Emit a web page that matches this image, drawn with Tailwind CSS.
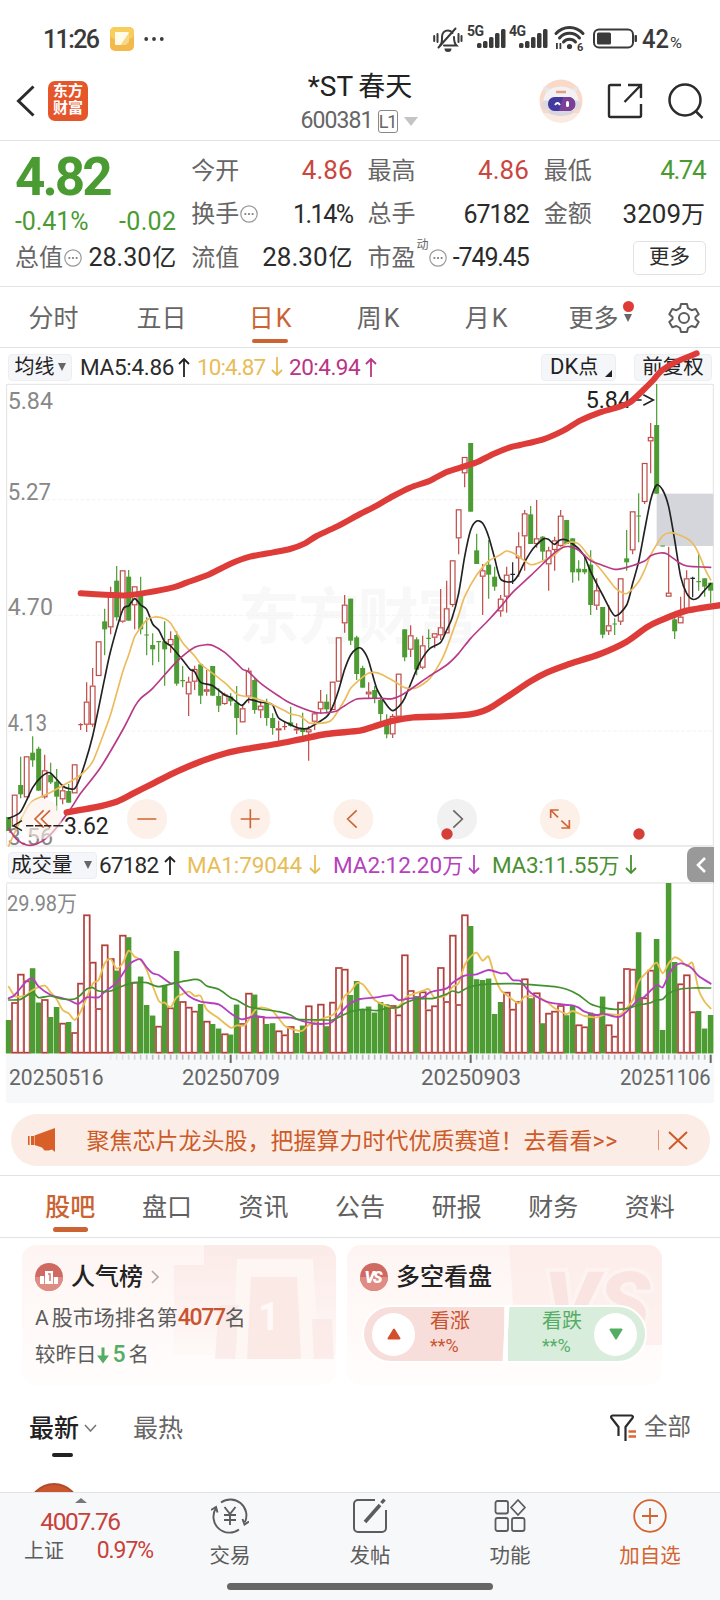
<!DOCTYPE html>
<html lang="zh-CN">
<head>
  <meta charset="UTF-8" />
  <meta name="viewport" content="width=device-width, initial-scale=1.0"/>
  <title>*ST春天 600381</title>
  <script src="https://cdn.jsdelivr.net/npm/@tailwindcss/browser@4"></script>
</head>
<body class="w-[720px] h-[1600px] overflow-hidden bg-white text-[#2b2b2b] font-['Roboto','Noto_Sans_CJK_SC',sans-serif] leading-none whitespace-nowrap flex flex-col">

  <!-- 状态栏 -->
  <div class="h-16 shrink-0 flex items-center pl-[43px] pr-[37px] pt-[14px] text-[#3a3a3a]">
    <span class="w-[56px] text-[25px] font-medium tracking-[-1.600px]">11:26</span>
    <svg class="w-6 h-6 ml-[11px]" viewBox="0 0 24 24">
      <rect width="24" height="24" rx="5" fill="#f3b94a"/>
      <rect width="24" height="12" rx="5" fill="#f7cd5c"/>
      <path d="M5 5h13a1 1 0 0 1 1 1L11 18H6a1 1 0 0 1-1-1z" fill="#fffbe8"/>
      <path d="M19 6v9l-3 3h-5z" fill="#f9d78a"/>
    </svg>
    <svg class="w-5 h-6 ml-[10px]" viewBox="0 0 20 24" fill="#3a3a3a"><circle cx="2.2" cy="12" r="1.9"/><circle cx="10" cy="12" r="1.9"/><circle cx="17.8" cy="12" r="1.9"/></svg>
    <svg class="w-[250px] h-8 ml-auto" viewBox="0 0 250 32" fill="#3a3a3a">
      <!-- 静音 -->
      <g fill="none" stroke="#3a3a3a" stroke-width="2" stroke-linecap="round">
        <path d="M7 22.500C9.500 20 9 17 9 14c0-4 2.500-6.500 6-6.500 2 0 3.500 1 4.500 2.500M21 14c0 4 0 6 2.500 8.500H11"/>
        <path d="M22.500 5.500 5.500 24.500M1.200 13v5M4.500 11v8M28.500 13v5M25.500 11v8"/>
      </g>
      <path d="M11.500 25.500h7a3.500 3.500 0 0 1-7 0z"/>
      <text x="34" y="13" font-size="14" font-weight="700" textLength="17">5G</text>
      <g><rect x="44" y="20" width="4.500" height="5" rx="1.500"/><rect x="50" y="18" width="4.500" height="7" rx="1.500"/><rect x="56" y="14" width="4.500" height="11" rx="1.500"/><rect x="62" y="10" width="4.500" height="15" rx="1.500"/><rect x="68" y="6" width="4.500" height="19" rx="1.500" /></g>
      <text x="76" y="13" font-size="14" font-weight="700" textLength="17">4G</text>
      <g><rect x="86" y="20" width="4.500" height="5" rx="1.500"/><rect x="92" y="18" width="4.500" height="7" rx="1.500"/><rect x="98" y="14" width="4.500" height="11" rx="1.500"/><rect x="104" y="10" width="4.500" height="15" rx="1.500"/><rect x="110" y="6" width="4.500" height="19" rx="1.500"/></g>
      <!-- wifi -->
      <g fill="none" stroke="#3a3a3a" stroke-width="3" stroke-linecap="round">
        <path d="M123 10.500a18 18 0 0 1 27 0M126.500 15a13 13 0 0 1 20 0M130.500 19a8 8 0 0 1 12 0"/>
      </g>
      <circle cx="136.500" cy="23.500" r="2.600"/>
      <path d="M123 20h1.800v6H123zM126.500 20h1.800v6h-1.800z"/>
      <text x="144" y="28" font-size="11" font-weight="700">6</text>
      <rect x="161" y="6.500" width="39" height="18" rx="5" fill="none" stroke="#3a3a3a" stroke-width="2"/>
      <rect x="164" y="9.500" width="14" height="12" rx="1.500"/>
      <rect x="201.500" y="12" width="2.500" height="7" rx="1"/>
      <text x="209" y="25" font-size="25" font-weight="500" textLength="27" lengthAdjust="spacingAndGlyphs">42</text>
      <text x="237" y="25" font-size="15" textLength="12" lengthAdjust="spacingAndGlyphs">%</text>
    </svg>
  </div>

  <!-- 标题栏 -->
  <header class="relative h-[77px] shrink-0 border-b border-[#e3e3e3] flex items-center px-4 pb-[2px]">
    <svg class="w-[19px] h-8" viewBox="0 0 19 32" fill="none" stroke="#2b2b2b" stroke-width="3"><path d="M17.500 1.500 2.500 16l15 14.500"/></svg>
    <div class="ml-[13px] w-[40px] h-10 rounded-[7px] bg-[#e6562b] text-white text-[15px] leading-[17px] font-bold text-center pt-[2px]">东方<br>财富</div>
    <div class="absolute inset-x-0 top-[6px] flex flex-col items-center pointer-events-none">
      <h1 class="text-[28px] leading-[34px] font-normal text-[#222]">*ST<span class="ml-[5px] text-[27px]">春天</span></h1>
      <div class="mt-[5px] flex items-center text-[23px] leading-6 text-[#666] ml-[-2px]">
        <span class="tracking-[-0.9px]">600381</span>
        <span class="ml-[5px] w-5 h-[23px] border border-[#888] rounded-[3px] text-[18px] leading-[22px] text-center tracking-[-1px]">L1</span>
        <span class="ml-[6px] w-0 h-0 border-x-[7px] border-x-transparent border-t-[9px] border-t-[#c4c4c4]"></span>
      </div>
    </div>
    <svg class="ml-auto w-11 h-11" viewBox="0 0 44 44">
      <circle cx="22" cy="22" r="21.500" fill="#f9d9c7"/>
      <path d="M4 34a21.500 21.500 0 0 0 36 0z" fill="#fbeae1"/>
      <path d="M8 16 4 7l8 3zM36 16l4-9-8 3z" fill="#e9e6ea"/>
      <ellipse cx="22" cy="21.500" rx="17.500" ry="14" fill="#f3f1f4"/>
      <ellipse cx="22" cy="32" rx="13" ry="5" fill="#d9d6de"/>
      <circle cx="7" cy="26" r="4.500" fill="#dcd9e0"/><circle cx="37" cy="26" r="4.500" fill="#dcd9e0"/>
      <path d="M17 13h10" stroke="#e0a27c" stroke-width="2.500"/>
      <rect x="9" y="18" width="27" height="14" rx="6.500" fill="#4339a0"/>
      <path d="M24 18h5.500a6.500 6.500 0 0 1 0 14H20z" fill="#7a3f96"/>
      <path d="M16 26q2.500-4 5 0" fill="none" stroke="#fff" stroke-width="1.800"/><rect x="27" y="22" width="3" height="6" rx="1.500" fill="#fff"/>
    </svg>
    <svg class="ml-[24px] w-9 h-9" viewBox="0 0 36 36" fill="none" stroke="#2b2b2b" stroke-width="2.400"><path d="M14 2H3.500A1.500 1.500 0 0 0 2 3.500v29A1.500 1.500 0 0 0 3.500 34h29a1.500 1.500 0 0 0 1.500-1.500V21M21 2h13v13M33.500 2.500 17.500 19"/></svg>
    <svg class="ml-[25px] w-9 h-9 mr-[0.500px]" viewBox="0 0 36 36" fill="none" stroke="#2b2b2b" stroke-width="2.500"><circle cx="17" cy="17" r="15.500"/><path d="m27.500 28 7 7"/></svg>
  </header>

  <!-- 行情 -->
  <section class="h-[146px] shrink-0 border-b border-[#e3e3e3] pt-[8px] px-[15px] grid grid-cols-4 auto-rows-[43.500px] content-start gap-x-[15px] text-2xl text-[#666] *:flex *:items-center *:justify-between">
    <div class="pt-[14px]"><b class="text-[53px] font-bold text-[#4a9b32] tracking-[-3px]">4.82</b></div>
    <div><span>今开</span><span class="text-[26px] text-[#c9473f]">4.86</span></div>
    <div><span>最高</span><span class="text-[26px] text-[#c9473f]">4.86</span></div>
    <div><span>最低</span><span class="text-[26px] text-[#4a9b32] tracking-[-1.500px]">4.74</span></div>

    <div class="pt-[14px] text-[25px] text-[#4a9b32]"><span class="tracking-[-0.1px]">-0.41%</span><span class="tracking-[0.3px]">-0.02</span></div>
    <div>
      <span class="flex items-center">换手<svg class="w-[18px] h-[18px] ml-px" viewBox="0 0 18 18"><circle cx="9" cy="9" r="8.200" fill="none" stroke="#999" stroke-width="1.200"/><path d="M4.500 9h1.800M8.100 9h1.800M11.700 9h1.800" stroke="#888" stroke-width="1.800"/></svg></span>
      <span class="text-[25px] text-[#2b2b2b] tracking-[-1.500px]">1.14%</span>
    </div>
    <div><span>总手</span><span class="text-[25px] text-[#2b2b2b] tracking-[-1px]">67182</span></div>
    <div><span>金额</span><span class="text-[26px] text-[#2b2b2b]">3209<span class="text-[24px]">万</span></span></div>

    <div>
      <span class="flex items-center">总值<svg class="w-[18px] h-[18px] ml-px" viewBox="0 0 18 18"><circle cx="9" cy="9" r="8.200" fill="none" stroke="#999" stroke-width="1.200"/><path d="M4.500 9h1.800M8.100 9h1.800M11.700 9h1.800" stroke="#888" stroke-width="1.800"/></svg></span>
      <span class="text-[25px] text-[#2b2b2b]">28.30<span class="text-[24px] ml-px">亿</span></span>
    </div>
    <div><span>流值</span><span class="text-[26px] text-[#2b2b2b]">28.30<span class="text-[24px] ml-px">亿</span></span></div>
    <div>
      <span class="flex items-center">市盈<sup class="text-[12px] top-[-13px] ml-px">动</sup><svg class="w-[18px] h-[18px]" viewBox="0 0 18 18"><circle cx="9" cy="9" r="8.200" fill="none" stroke="#999" stroke-width="1.200"/><path d="M4.500 9h1.800M8.100 9h1.800M11.700 9h1.800" stroke="#888" stroke-width="1.800"/></svg></span>
      <span class="text-[25px] text-[#2b2b2b] tracking-[-1.100px]">-749.45</span>
    </div>
    <div><button class="ml-auto mr-[-1px] w-[73px] h-[34px] border border-[#e2e2e2] rounded-[5px] text-[20.500px] text-[#2b2b2b]">更多</button></div>
  </section>

  <!-- 周期切换 -->
  <nav class="relative h-[61px] shrink-0 border-b border-[#e3e3e3] pt-[2px] flex items-center text-[25px] text-[#666]">
    <span class="w-[107px] text-center">分时</span>
    <span class="w-[109px] text-center">五日</span>
    <span class="w-[108px] text-center relative text-[#cb6432]">日<span class="ml-[2px]">K</span><i class="absolute left-[36px] top-[33px] w-9 h-1 rounded-full bg-[#cb6432]"></i></span>
    <span class="w-[108px] text-center">周<span class="ml-[2px]">K</span></span>
    <span class="w-[108px] text-center">月<span class="ml-[2px]">K</span></span>
    <span class="w-[107px] text-center relative">更多
      <i class="absolute left-[83px] top-[-5px] w-[11px] h-[11px] rounded-full bg-[#dd3c36]"></i>
      <i class="absolute left-[84px] top-[8px] w-0 h-0 border-x-[4.500px] border-x-transparent border-t-[8px] border-t-[#666]"></i>
    </span>
    <svg class="w-8 h-8 ml-[21px]" viewBox="0 0 32 32" fill="none" stroke="#5c5c5c" stroke-width="2" stroke-linejoin="round"><path d="M13 2h6l1 4.200 3.500 2L27.700 7l3 5.200-3.200 2.900v2l3.200 2.900-3 5.200-4.200-1.200-3.500 2L19 30h-6l-1-4-3.500-2-4.200 1.200-3-5.200 3.200-2.900v-2l-3.200-2.900 3-5.200 4.200 1.200 3.500-2z"/><circle cx="16" cy="16" r="5"/></svg>
  </nav>

  <!-- 均线 -->
  <div class="h-[36px] shrink-0 flex items-center px-2 pt-[2px] text-[22.500px]">
    <span class="w-16 h-[27px] rounded bg-[#f5f6f9] border border-[#eceef1] flex items-center justify-center text-[20px] text-[#222]">均线<i class="ml-[3px] w-0 h-0 border-x-[4px] border-x-transparent border-t-[8px] border-t-[#666]"></i></span>
    <span class="ml-[8px] w-[110px] flex items-center justify-between"><span class="tracking-[-0.3px]">MA5:4.86</span><svg class="w-3 h-5" viewBox="0 0 12 20" fill="none" stroke="#222" stroke-width="1.800"><path d="M6 20V2M1 7l5-5 5 5"/></svg></span>
    <span class="ml-[7px] w-[86px] flex items-center justify-between text-[#e8bd58]"><span class="tracking-[-0.9px]">10:4.87</span><svg class="w-3 h-5" viewBox="0 0 12 20" fill="none" stroke="#e8bd58" stroke-width="1.800"><path d="M6 0v18M1 13l5 5 5-5"/></svg></span>
    <span class="ml-[6px] w-[88px] flex items-center justify-between text-[#b93585]"><span class="tracking-[-0.5px]">20:4.94</span><svg class="w-3 h-5" viewBox="0 0 12 20" fill="none" stroke="#b93585" stroke-width="1.800"><path d="M6 20V2M1 7l5-5 5 5"/></svg></span>
    <span class="ml-auto w-[75px] h-[27px] rounded bg-[#f5f6f9] border border-[#eceef1] flex items-center pl-2 text-[22px] text-[#222]">DK<span class="text-[20px]">点</span><i class="ml-[7px] mt-3 w-0 h-0 border-l-[7px] border-l-transparent border-b-[7px] border-b-[#222]"></i></span>
    <span class="ml-[18px] w-[78px] h-[27px] rounded bg-[#f5f6f9] border border-[#eceef1] flex items-center justify-center text-[20.500px] text-[#222]">前复权</span>
  </div>

  <!-- K线图，坐标单位为 1/3 像素 -->
  <div class="relative z-10 h-[463px] shrink-0">
    <svg id="kline" class="absolute left-0 top-[-4px] w-[720px] h-[470px] overflow-visible" viewBox="0 0 2160 1410"></svg>
  </div>

  <!-- 成交量 -->
  <div class="h-[36px] shrink-0 flex items-center pl-2 pr-[6px] text-[22.500px]">
    <span class="w-[89px] h-[27px] rounded bg-[#f5f6f9] border border-[#eceef1] flex items-center justify-between pl-[2px] pr-[4px] text-[20.500px] text-[#222]">成交量<i class="w-0 h-0 border-x-[4.500px] border-x-transparent border-t-[8px] border-t-[#666]"></i></span>
    <span class="ml-[2px] w-[77px] flex items-center justify-between"><span class="tracking-[-0.8px]">67182</span><svg class="w-3 h-5" viewBox="0 0 12 20" fill="none" stroke="#222" stroke-width="1.800"><path d="M6 20V2M1 7l5-5 5 5"/></svg></span>
    <span class="ml-[11px] w-[134px] flex items-center justify-between text-[#e8bd58]"><span class="tracking-[-0.1px]">MA1:79044</span><svg class="w-3 h-5" viewBox="0 0 12 20" fill="none" stroke="#e8bd58" stroke-width="1.800"><path d="M6 0v18M1 13l5 5 5-5"/></svg></span>
    <span class="ml-[12px] w-[147px] flex items-center justify-between text-[#b541bd]"><span>MA2:12.20<span class="text-[21px]">万</span></span><svg class="w-3 h-5" viewBox="0 0 12 20" fill="none" stroke="#b541bd" stroke-width="1.800"><path d="M6 0v18M1 13l5 5 5-5"/></svg></span>
    <span class="ml-[12px] w-[145px] flex items-center justify-between text-[#4a9032]"><span class="tracking-[-0.3px]">MA3:11.55<span class="text-[21px]">万</span></span><svg class="w-3 h-5" viewBox="0 0 12 20" fill="none" stroke="#4a9032" stroke-width="1.800"><path d="M6 0v18M1 13l5 5 5-5"/></svg></span>
    <span class="ml-auto w-[27px] h-9 rounded-l-lg bg-[#999] flex items-center justify-center"><svg class="w-3 h-4" viewBox="0 0 12 16" fill="none" stroke="#fff" stroke-width="2.600"><path d="M10 1 3 8l7 7"/></svg></span>
  </div>
  <svg id="volume" class="w-[720px] h-[223px] mt-[-3px] shrink-0" viewBox="0 0 2160 669"></svg>

  <!-- 广告条 -->
  <div class="mt-[11px] mx-[10.500px] h-[52px] shrink-0 rounded-[26px] bg-[#fbede5] flex items-center text-[23px] text-[#cd5b29]">
    <svg class="ml-[17px] w-7 h-6" viewBox="0 0 28 24" fill="#d95f29"><path d="M0 8h1.600v9H0zM3 8h3v9H3zM6.500 7.500 27 0v24l-3-2.500-3.500 1-4 0-2.500-3-7.500-2.500z"/></svg>
    <span class="ml-[31px] w-[535px] pt-[2px]">聚焦芯片龙头股，把握算力时代优质赛道！去看看<span class="tracking-[0.8px]">&gt;&gt;</span></span>
    <i class="ml-[36px] w-px h-5 bg-[#dd9470]"></i>
    <svg class="ml-[9px] w-5 h-[19px]" viewBox="0 0 20 19" fill="none" stroke="#cd5b29" stroke-width="2"><path d="m1 1 18 17M19 1 1 18"/></svg>
  </div>

  <!-- 资讯栏目 -->
  <nav class="relative mt-[9px] h-[63px] shrink-0 border-y border-[#e3e3e3] flex items-center pt-[2px] pl-[22px] text-[25px] text-[#606060] *:w-[96.600px] *:text-center">
    <span class="relative text-[#cb6432] font-medium">股吧<i class="absolute left-[31px] top-[32px] w-[35px] h-[5px] rounded-full bg-[#cb6432]"></i></span>
    <span>盘口</span>
    <span>资讯</span>
    <span>公告</span>
    <span>研报</span>
    <span>财务</span>
    <span>资料</span>
  </nav>

  <div class="mt-[7px] pl-[22px] flex gap-[11px] h-[140px] shrink-0">
    <!-- 人气榜 -->
    <div class="relative w-[314px] rounded-[14px] overflow-hidden bg-linear-to-b from-[#fef5f3] to-[#fffdfc] px-[13px] pt-[18px]">
      <svg class="absolute right-0 top-0 w-[170px] h-[140px]" viewBox="0 0 170 140">
        <defs><linearGradient id="fade" x1="0" y1="0" x2="0" y2="1"><stop offset="0" stop-color="#fae7e4" stop-opacity=".75"/><stop offset="1" stop-color="#fae7e4" stop-opacity=".1"/></linearGradient></defs>
        <path d="M38 0h132v110H8V20h30z" fill="url(#fade)"/>
        <path d="M71 14h76l6 100H67z" fill="#fef6f3"/><path d="M85 32h46l4 82H81z" fill="#f9e4e1" opacity=".75"/>
        <path d="M53 60h20l-4 54H49zM146 74h20l2 40h-20z" fill="#fae7e4" opacity=".7"/>
        <text x="92" y="85" font-size="38" font-weight="700" fill="#fffaf8">1</text>
      </svg>
      <div class="relative flex items-center h-7 text-2xl font-medium text-[#222]">
        <svg class="w-7 h-7 mr-2" viewBox="0 0 28 28"><circle cx="14" cy="14" r="14" fill="#cf6a62"/><path d="M0 14a14 14 0 0 0 28 0z" fill="#de8c84"/><path d="M5 13h4v8H5zM10 8h8v13h-8zM19 14h4v7h-4z" fill="#fff"/><path d="M13 11h2v7" stroke="#d5766f" stroke-width="1.500" fill="none"/></svg>
        人气榜
        <svg class="w-2 h-[14px] ml-2" viewBox="0 0 8 14" fill="none" stroke="#aaa" stroke-width="1.600"><path d="m1 1 6 6-6 6"/></svg>
      </div>
      <p class="relative mt-[15px] text-[21px] leading-6 text-[#5c5c5c]">A<span class="ml-[3px]">股市场排名第</span><span class="font-medium text-[23px] text-[#c9542f] tracking-[-1.300px]">4077</span>名</p>
      <p class="relative mt-[13px] text-[20.500px] leading-6 text-[#5c5c5c] flex items-center">较昨日<svg class="w-3 h-[17px]" viewBox="0 0 12 16"><path d="M4.500 0h3v8H12l-6 8-6-8h4.500z" fill="#55ad65"/></svg><span class="font-medium text-[23px] text-[#55ad65] ml-[4px] mr-[3px]">5</span>名</p>
    </div>

    <!-- 多空看盘 -->
    <div class="relative w-[315px] rounded-[14px] overflow-hidden bg-linear-to-b from-[#fef5f3] to-[#fffdfc] px-[13px] pt-[18px]">
      <svg class="absolute right-0 top-0 w-[160px] h-[100px]" viewBox="0 0 160 100">
        <path d="M7 0h153v100H14z" fill="#fbe9e6" opacity=".6"/>
        <text x="42" y="86" font-size="84" font-weight="900" font-style="italic" fill="#fae4e1" stroke="#fdf4f2" stroke-width="7" paint-order="stroke" textLength="106" lengthAdjust="spacingAndGlyphs">VS</text>
      </svg>
      <div class="relative flex items-center h-7 text-2xl font-medium text-[#222]">
        <svg class="w-7 h-7 mr-2" viewBox="0 0 28 28"><circle cx="14" cy="14" r="14" fill="#cf6a62"/><path d="M0 14a14 14 0 0 0 28 0z" fill="#de8c84"/><text x="4.500" y="20" font-size="16" font-weight="900" font-style="italic" fill="#fff" textLength="18">VS</text></svg>
        多空看盘
      </div>
      <div class="relative mt-[14px] ml-[2px] w-[285px] h-[58px] rounded-full border-2 border-white flex overflow-hidden text-[20px]">
        <div class="w-[140px] bg-[#f8dedb] flex items-center pl-2 text-[#c9542f]">
          <i class="w-[43px] h-[43px] rounded-full bg-white flex items-center justify-center"><svg class="w-[14px] h-3" viewBox="0 0 14 12"><path d="M7 1.500 12.500 10.500h-11z" fill="#d1502b" stroke="#d1502b" stroke-width="2" stroke-linejoin="round"/></svg></i>
          <span class="ml-[15px] mt-[-3px] flex flex-col leading-[26px]"><span>看涨</span><span class="text-[18px] leading-6">**%</span></span>
        </div>
        <div class="w-[4px] bg-white skew-x-[-3deg]"></div>
        <div class="flex-1 bg-[#d9eddd] flex items-center justify-end pr-2 text-[#55ad65]">
          <span class="mr-[12px] mt-[-3px] flex flex-col leading-[26px]"><span>看跌</span><span class="text-[18px] leading-6">**%</span></span>
          <i class="w-[43px] h-[43px] rounded-full bg-white flex items-center justify-center"><svg class="w-[14px] h-3" viewBox="0 0 14 12"><path d="M7 10.500 12.500 1.500h-11z" fill="#55ad65" stroke="#55ad65" stroke-width="2" stroke-linejoin="round"/></svg></i>
        </div>
      </div>
    </div>
  </div>

  <!-- 帖子列表 -->
  <div class="mt-[20px] h-11 shrink-0 flex items-center pt-[2px] pl-[29px] pr-[29px] text-[25px] text-[#666]">
    <span class="relative font-medium text-[#222]">最新<i class="absolute left-[23px] top-[37px] w-[21px] h-[4px] rounded-full bg-[#222]"></i></span>
    <svg class="ml-[5px] w-[13px] h-2" viewBox="0 0 13 8" fill="none" stroke="#777" stroke-width="1.600"><path d="m1 1 5.500 6L12 1"/></svg>
    <span class="ml-[36px]">最热</span>
    <svg class="ml-auto w-[26px] h-7" viewBox="0 0 26 28" fill="none" stroke="#2b2b2b" stroke-width="2.200"><path d="M8.500 22V13L1.500 4c-.8-1-.3-2.500 1-2.500h19c1.300 0 1.800 1.500 1 2.500l-7 9v14"/><path d="M18.500 17.500H26M18.500 22.500H26" stroke="#dd6a35" stroke-width="2.600"/></svg>
    <span class="ml-[8px] text-[23.500px]">全部</span>
  </div>
  <div class="h-[43px] shrink-0 pt-[34px] pl-7 overflow-hidden">
    <div class="w-[52px] h-[52px] rounded-full bg-[#c9562d] border-2 border-[#b54a2b]"></div>
  </div>

  <!-- 底部导航 -->
  <footer class="relative h-[108px] shrink-0 bg-[#f7f8fa] border-t border-[#e0e2e5] text-[20.500px] text-[#5c5c5c] flex">
    <i class="absolute left-[75px] top-[5px] w-0 h-0 border-x-[6px] border-x-transparent border-b-[5px] border-b-[#777]"></i>
    <div class="w-[160px] pt-[17px] text-center text-[#c9413c]">
      <div class="text-[24.500px] leading-6 tracking-[-1.400px]">4007.76</div>
      <div class="mt-[5px] pl-6 pr-[7px] flex justify-between items-center"><span class="text-[#5c5c5c] text-[20px]">上证</span><span class="text-[23px] leading-6 tracking-[-1.100px]">0.97%</span></div>
    </div>
    <div class="w-[140px] pt-[5px] flex flex-col items-center gap-[12px]">
      <svg class="w-[38px] h-9" viewBox="0 0 38 36" fill="none" stroke="#5c5c5c" stroke-width="1.900"><path d="M10 4.500A16 16 0 0 1 34 24M28 31.500A16 16 0 0 1 5 10M0 12l5-3 1.500 5.500M38 23.500l-4.500 3-2-5.500M13.500 9l5.500 7 5.500-7M19 16v11M13 17h12M13 22h12"/></svg>
      <span>交易</span>
    </div>
    <div class="w-[140px] pt-[5px] flex flex-col items-center gap-[12px]">
      <svg class="w-9 h-9" viewBox="0 0 36 36" fill="none" stroke="#5c5c5c" stroke-width="2"><path d="M23 2H6a4 4 0 0 0-4 4v24a4 4 0 0 0 4 4h24a4 4 0 0 0 4-4V12"/><path d="m13 24 15-17" stroke-width="3.600"/><path d="m29.500 5 3-3.500" stroke-width="3.400"/></svg>
      <span>发帖</span>
    </div>
    <div class="w-[140px] pt-[5px] flex flex-col items-center gap-[12px]">
      <svg class="w-8 h-9" viewBox="0 0 32 36" fill="none" stroke="#5c5c5c" stroke-width="1.800"><rect x="1.500" y="3" width="12.500" height="12.500" rx="2"/><path d="m24 2 7 7.500-7 7.500-7-7.500z" stroke-linejoin="round"/><rect x="1.500" y="20" width="12.500" height="13" rx="2"/><rect x="18" y="20" width="12.500" height="13" rx="2"/></svg>
      <span>功能</span>
    </div>
    <div class="w-[140px] pt-[5px] flex flex-col items-center gap-[12px] text-[#d4632f]">
      <svg class="w-9 h-9" viewBox="0 0 36 36" fill="none" stroke="#d4632f" stroke-width="1.800"><circle cx="18" cy="18" r="15.800"/><path d="M18 10v16M10 18h16"/></svg>
      <span>加自选</span>
    </div>
    <i class="absolute left-[227px] top-[90px] w-[266px] h-[7px] rounded-full bg-[#666]"></i>
  </footer>

  <script>
    const RED = '#bf4a46', GREEN = '#4c9c33';
    const xOf = i => 26 + 18 * i;

    // [颜色, 最高, 实体上沿, 实体下沿, 最低]
    const candles = [
      ['g',1311,1311,1353,1353],['r',1244,1244,1340,1340],['g',1130,1215,1243,1255],['r',1129,1129,1252,1252],
      ['g',1069,1118,1141,1160],['g',1100,1106,1232,1232],['r',1124,1171,1252,1256],['g',1148,1185,1207,1212],
      ['g',1167,1205,1250,1292],['r',1213,1231,1258,1273],['g',1212,1233,1268,1268],['r',1153,1153,1240,1240],
      ['r',1030,1033,1035,1050],['r',907,965,1034,1056],['r',864,917,1034,1040],['r',784,784,888,888],
      ['g',686,724,748,826],['r',620,648,742,763],['g',558,602,712,722],['r',571,571,725,728],
      ['g',570,590,722,722],['r',619,619,676,748],['g',590,645,748,763],['g',712,764,766,826],
      ['g',760,795,808,856],['g',784,784,787,846],['g',724,784,808,917],['r',754,777,796,818],
      ['g',754,765,911,917],['g',858,901,904,922],['r',890,905,943,1008],['r',857,867,905,930],
      ['g',850,853,947,972],['r',870,928,935,947],['g',858,858,947,947],['g',925,948,977,996],
      ['r',938,943,972,974],['g',940,950,964,977],['g',918,968,1014,1064],['r',975,985,1027,1027],
      ['r',863,872,950,970],['g',893,900,990,1001],['r',965,977,991,1014],['g',956,968,1014,1037],
      ['g',1000,1014,1044,1064],['r',1022,1045,1051,1083],['r',1026,1039,1041,1050],['g',980,1027,1038,1040],
      ['r',1030,1046,1051,1062],['g',998,1044,1056,1070],['r',1038,1048,1057,1142],['r',995,1000,1025,1050],
      ['r',930,965,988,1001],['g',943,965,988,1000],['r',905,905,990,990],['r',772,772,905,905],
      ['r',645,674,730,758],['g',656,656,782,795],['g',767,772,882,900],['g',857,864,923,923],
      ['r',907,935,943,957],['g',918,930,955,970],['g',955,960,1002,1025],['g',1003,1025,1063,1075],
      ['r',1002,1008,1063,1074],['r',881,881,1010,1010],['g',748,748,832,844],['r',736,766,809,831],
      ['g',772,778,869,886],['r',767,796,863,868],['g',748,774,776,805],['r',760,760,773,805],
      ['r',627,742,766,780],['r',602,685,760,760],['r',541,541,675,680],['r',388,388,475,523],
      ['r',231,231,280,322],['g',189,189,395,395],['g',461,511,552,552],['r',552,571,590,705],
      ['g',480,554,584,656],['g',560,590,620,632],['r',645,656,694,710],['r',560,584,650,698],
      ['k',547,582,584,612],['r',457,499,535,590],['r',390,400,469,572],['g',378,403,492,492],
      ['r',360,475,492,503],['g',468,470,515,540],['r',500,511,553,632],['r',470,481,510,572],
      ['r',390,407,498,500],['g',420,420,492,492],['g',475,475,577,608],['g',541,566,577,602],
      ['g',523,567,577,583],['g',511,554,675,705],['r',595,631,677,690],['g',681,681,764,775],
      ['r',675,736,754,765],['g',715,731,734,765],['r',595,595,725,735],['g',450,535,547,572],
      ['r',394,394,511,523],['g',340,407,409,487],['r',249,249,366,372],['r',129,171,184,280],
      ['g',12,135,341,341],['g',497,497,500,500],['r',500,638,650,650],['g',700,718,754,777],
      ['r',650,710,730,730],['r',571,595,690,690],['k',590,594,596,652],['g',523,604,606,632],
      ['g',595,595,620,650],['g',608,608,632,670],
    ];

    const ma5 = '26,1315 62,1295 98,1223 125,1190 150,1178 188,1218 208,1226 225,1225 245,1180 278,1068 314,895 332,812 368,690 386,678 404,656 422,675 440,688 458,732 476,750 494,785 512,798 548,840 570,868 584,875 602,907 638,917 674,945 692,952 725,976 746,958 782,967 800,968 818,975 836,1014 872,1034 900,1045 926,1044 980,1010 998,980 1016,930 1034,868 1052,825 1070,806 1085,806 1105,840 1130,925 1160,975 1178,992 1196,980 1214,955 1250,868 1268,833 1290,805 1322,787 1340,750 1356,715 1376,640 1394,530 1412,450 1430,423 1448,430 1466,470 1484,535 1502,598 1537,605 1555,585 1573,548 1600,505 1630,477 1645,478 1663,493 1680,480 1700,480 1718,492 1735,505 1754,530 1772,575 1808,645 1844,707 1880,675 1898,610 1916,545 1934,450 1952,360 1970,315 1988,330 2006,380 2024,480 2042,590 2060,640 2078,658 2095,653 2110,635 2132,611';
    const ma10 = '26,1398 50,1345 80,1285 98,1263 150,1238 206,1207 242,1185 278,1145 314,1053 332,1003 368,876 386,825 404,770 422,743 440,720 464,711 494,716 512,730 548,788 584,828 602,852 638,880 674,908 710,942 730,948 750,951 800,966 850,990 872,1002 900,1008 926,1028 944,1030 980,1027 998,1017 1034,960 1052,925 1080,898 1105,880 1124,877 1142,882 1190,908 1214,923 1250,923 1290,895 1322,845 1340,805 1358,755 1376,705 1394,650 1430,585 1466,543 1500,525 1520,513 1550,525 1592,554 1628,543 1663,525 1700,490 1720,486 1740,495 1772,535 1808,575 1844,622 1870,640 1885,638 1916,605 1934,570 1952,525 1988,468 2010,458 2030,462 2060,475 2078,490 2096,520 2114,565 2132,600';
    const ma20 = '26,1345 50,1378 80,1395 110,1392 150,1365 206,1295 242,1240 300,1165 368,1050 404,980 422,955 458,925 530,845 584,802 620,794 640,797 674,817 710,850 728,868 746,876 782,910 836,948 872,970 944,997 980,998 1010,993 1034,977 1070,957 1105,955 1142,955 1178,956 1214,940 1286,890 1340,855 1376,820 1412,775 1466,720 1502,680 1538,637 1592,587 1628,552 1664,518 1690,502 1710,500 1735,510 1772,542 1800,553 1844,568 1880,562 1934,543 1952,527 1980,519 2000,521 2040,550 2060,558 2080,560 2132,562';
    // 手绘通道线
    const upper = '242,640 330,645 380,646 440,638 520,622 560,608 630,582 690,552 750,530 820,517 870,507 915,490 950,468 1010,440 1080,402 1120,382 1180,348 1230,323 1290,302 1340,276 1390,260 1430,247 1480,222 1530,202 1560,195 1630,178 1690,152 1740,122 1800,97 1850,83 1890,67 1930,30 1960,0 1985,-28 2030,-55 2090,-80';
    const lower = '200,1297 280,1283 350,1265 400,1240 460,1210 530,1175 600,1145 680,1119 750,1105 830,1092 900,1078 980,1062 1080,1052 1120,1040 1180,1022 1240,1012 1330,1009 1410,1003 1450,993 1480,978 1530,945 1590,905 1640,878 1700,855 1800,822 1880,785 1940,742 1980,722 2060,692 2165,675';

    // 折线转平滑曲线
    function smooth(str) {
      const p = str.split(' ').map(s => s.split(',').map(Number));
      let d = `M${p[0]}`;
      for (let i = 0; i < p.length - 1; i++) {
        const a = p[i - 1] || p[i], b = p[i], c = p[i + 1], e = p[i + 2] || c;
        d += `C${b[0] + (c[0] - a[0]) / 8} ${b[1] + (c[1] - a[1]) / 8} ${c[0] - (e[0] - b[0]) / 8} ${c[1] - (e[1] - b[1]) / 8} ${c[0]} ${c[1]}`;
      }
      return d;
    }
    const line = (pts, color, w) => `<path d="${smooth(pts)}" fill="none" stroke="${color}" stroke-width="${w}" stroke-linecap="round" stroke-linejoin="round"/>`;
    const label = (t, x, y, w, size, color) => `<text x="${x}" y="${y}" font-size="${size}" fill="${color}" textLength="${w}" lengthAdjust="spacingAndGlyphs">${t}</text>`;

    let k = `<text x="715" y="776" font-size="184" font-weight="700" fill="#f8f8f8" textLength="720" font-family="Noto Sans CJK SC">东方财富</text>`;
    k += `<path d="M20 1398V13H2140V1398" fill="none" stroke="#e2e2e2" stroke-width="3"/><path d="M20 1398H2140" stroke="#ebebeb" stroke-width="6"/>`;
    for (const y of [359, 706, 1053]) k += `<path d="M20 ${y}H2140" stroke="#f3f3f3" stroke-width="3" stroke-dasharray="12 5"/>`;
    k += `<rect x="1970" y="341" width="170" height="157" fill="#d5d6dc"/>`;
    [['5.84', 88], ['5.27', 360], ['4.70', 705], ['4.13', 1052], ['3.56', 1395]].forEach(([t, y]) => {
      k += label(t, 23, y, t === '4.13' ? 118 : t === '5.27' ? 130 : 136, 71, '#888');
    });
    candles.forEach(([c, h, t, b, l], i) => {
      const x = xOf(i), col = c === 'g' ? GREEN : c === 'r' ? RED : '#222';
      if (b - t < 4) {
        k += `<path d="M${x} ${h}V${l}M${x - 7} ${t + 1}H${x + 7}" stroke="${col}" stroke-width="3.600"/>`;
      } else if (c === 'r') {
        k += `<path d="M${x} ${h}V${t}M${x} ${b}V${l}" stroke="${col}" stroke-width="3.600"/><rect x="${x - 7}" y="${t + 1.5}" width="14" height="${b - t - 3}" fill="#fff" stroke="${col}" stroke-width="3.600"/>`;
      } else {
        k += `<path d="M${x} ${h}V${l}" stroke="${col}" stroke-width="3.600"/><rect x="${x - 7.5}" y="${t}" width="15" height="${b - t}" fill="${col}"/>`;
      }
    });
    k += line(ma5, '#222', 5) + line(ma10, '#ecbb5c', 5) + line(ma20, '#b83a86', 5);
    // 高低点标注
    k += label('5.84', 1757, 84, 136, 72, '#222') + `<path d="M1900 60H1925M1930 44l30 16-30 16" fill="none" stroke="#222" stroke-width="5"/>`;
    // 图表按钮
    [125, 441, 751, 1060, 1371, 1680].forEach((x, i) => {
      k += `<circle cx="${x}" cy="1317" r="60" fill="${i === 4 ? '#f1f1f1' : '#fcf0e9'}" fill-opacity="${i === 0 ? .6 : 1}"/>`;
    });
    k += `<g fill="none" stroke="#cf6535" stroke-width="5"><path d="M131 1291l-26 26 26 26M150 1291l-26 26 26 26M412 1317h57M722 1317h57M751 1288v57M1070 1291l-27 26 27 26"/>
      <path d="M1652 1314v-24h24M1652 1290l22 22M1708 1320v24h-24M1708 1344l-24-22"/></g><path d="M1360 1291l27 26-27 26" fill="none" stroke="#666" stroke-width="5"/>`;
    k += `<path d="M66 1322l-26 15 26 15M78 1337h22M105 1337h22M132 1337h22M160 1337h30" fill="none" stroke="#222" stroke-width="4.500"/>` + label('3.62', 192, 1363, 134, 72, '#222');
    k += `<circle cx="1341" cy="1362" r="17" fill="#d63f37"/><circle cx="1917" cy="1362" r="17" fill="#d63f37"/>`;
    k += line(upper, '#dd3c38', 18) + line(lower, '#dd3c38', 19);
    document.getElementById('kline').innerHTML = k;

    // 成交量柱：颜色 + 柱顶
    const vols = 'g420 r369 r284 r304 g265 g368 r360 g411 g381 r431 g426 r459 r311 r106 r248 r387 r196 r237 g272 r167 g172 r308 g290 g375 g407 r440 g315 r385 g213 r366 r383 r395 g372 r425 g432 g446 r463 g464 g374 r432 r341 g344 r411 g432 g430 r454 r466 r441 g459 g437 r379 r431 r374 g439 r368 r264 r269 g345 g303 g388 g380 g398 g366 g373 r378 r406 r226 r333 g348 r337 r391 r379 r264 r366 r167 r375 r106 g138 g298 g300 g296 g402 g366 r338 r389 r366 r298 g355 r340 g430 r401 r395 r378 g406 g378 r436 r442 g398 r405 g350 r436 r470 r368 r267 r269 g157 r355 r272 g177 g450 g9 g246 r313 r286 r397 g393 g446 g405'.split(' ');
    const v1 = '26,320 44,348 60,350 80,345 98,330 134,317 150,335 170,358 188,390 206,400 224,420 242,395 278,312 296,300 314,250 332,237 350,266 368,250 386,212 404,230 422,240 440,270 476,362 494,368 512,382 530,352 566,335 584,348 602,348 620,388 656,415 692,443 710,436 735,435 764,392 782,382 818,393 854,437 890,451 908,452 926,435 962,418 998,405 1016,385 1034,348 1052,335 1070,310 1088,313 1106,335 1124,360 1160,378 1185,385 1205,370 1220,350 1270,332 1286,327 1304,353 1340,345 1358,320 1376,310 1394,255 1412,230 1430,218 1448,242 1466,230 1484,290 1502,330 1520,345 1555,370 1574,350 1610,350 1640,365 1664,385 1700,402 1718,393 1754,408 1790,412 1820,402 1862,403 1898,360 1916,305 1952,265 1970,248 1988,280 2006,250 2024,232 2042,240 2060,258 2078,250 2096,330 2114,365 2132,385';
    const v2 = '26,355 44,345 80,303 98,295 116,320 152,345 180,353 206,360 235,372 260,352 296,352 314,335 350,308 386,255 404,242 422,238 440,262 458,280 476,285 512,310 530,310 566,348 602,365 656,373 692,400 725,418 764,408 800,413 872,413 908,423 944,431 980,431 998,425 1034,385 1052,370 1080,357 1120,353 1160,347 1178,346 1196,360 1230,355 1268,352 1290,337 1340,325 1358,308 1394,287 1430,283 1466,270 1502,280 1520,280 1538,300 1560,302 1574,318 1592,338 1628,360 1650,368 1700,375 1718,376 1736,383 1754,395 1790,405 1808,401 1844,410 1860,410 1880,395 1916,358 1934,350 1970,315 1988,322 2006,285 2024,258 2042,250 2060,255 2078,267 2096,288 2132,311';
    const v3 = '26,360 62,358 98,337 116,353 152,348 188,357 224,357 242,345 260,327 278,323 296,333 332,333 368,318 404,308 440,308 476,320 530,308 584,298 602,302 620,318 656,328 692,353 710,360 746,380 782,387 836,395 872,405 890,417 908,419 980,420 998,420 1034,403 1052,395 1088,388 1130,392 1160,385 1196,382 1214,370 1250,357 1300,355 1340,342 1358,333 1376,338 1394,328 1412,320 1448,313 1538,311 1592,314 1664,320 1700,328 1736,345 1772,372 1808,383 1844,388 1880,386 1916,375 1934,372 1952,368 1970,360 1988,358 2006,340 2042,327 2078,324 2132,324';

    let v = `<path d="M20 520V9M2140 9V520" stroke="#e2e2e2" stroke-width="3"/><path d="M20 9H2140" stroke="#efefef" stroke-width="6"/>`;
    v += `<rect x="18" y="521" width="2124" height="148" fill="#f7f8fa"/>`;
    v += label('29.98万', 21, 94, 210, 66, '#888');
    vols.forEach((s, i) => {
      const x = xOf(i), y = +s.slice(1);
      v += s[0] === 'g'
        ? `<rect x="${x - 9}" y="${y}" width="18" height="${520 - y}" fill="#9ccb8b"/><rect x="${x - 8}" y="${y}" width="15" height="${520 - y}" fill="${GREEN}"/>`
        : `<rect x="${x - 8}" y="${y}" width="17" height="${518 - y}" fill="#fff" stroke="#e9b3ae" stroke-width="6"/><rect x="${x - 8}" y="${y}" width="17" height="${518 - y}" fill="none" stroke="#ad423e" stroke-width="4.500"/>`;
    });
    v += line(v1, '#e9be52', 5.5) + line(v2, '#b53fc0', 5.5) + line(v3, '#43902f', 5);
    for (let i = 17; i < 118; i++) {
      const big = [37, 77, 117].includes(i);
      v += `<path d="M${xOf(i)} 524V${big ? 549 : 539}" stroke="${big ? '#666' : '#bbb'}" stroke-width="${big ? 6 : 5}" opacity="${Math.min(1, (i - 15) / 10)}"/>`;
    }
    [['20250516', 27, 284], ['20250709', 546, 294], ['20250903', 1263, 300], ['20251106', 1860, 272]].forEach(([t, x, w]) => {
      v += label(t, x, 615, w, 68, '#666');
    });
    document.getElementById('volume').innerHTML = v;
  </script>
</body>
</html>
